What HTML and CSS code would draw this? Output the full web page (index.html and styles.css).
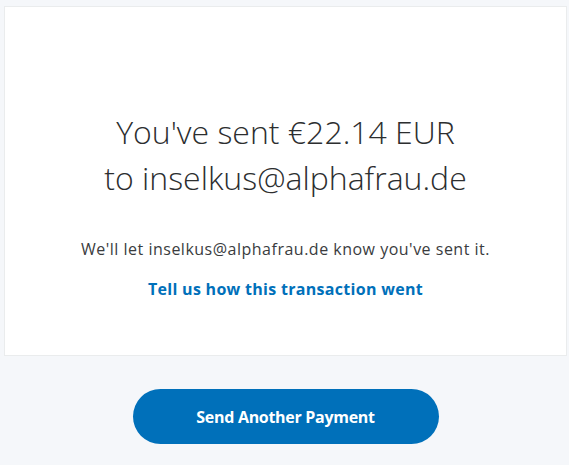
FILE: index.html
```html
<!DOCTYPE html>
<html lang="en">
<head>
<meta charset="utf-8">
<link rel="stylesheet" href="styles.css">
</head>
<body>
<main class="page">
  <section class="card">
    <h1 class="title">You've sent €22.14 EUR<br>to inselkus@alphafrau.de</h1>
    <p class="note">We'll let inselkus@alphafrau.de know you've sent it.</p>
    <a class="feedback" href="#">Tell us how this transaction went</a>
  </section>
  <div class="actions">
    <button class="primary" type="button">Send Another Payment</button>
  </div>
</main>
</body>
</html>
```
FILE: styles.css
```css
* { box-sizing: border-box; }
html, body { margin: 0; padding: 0; }
body {
  background: #f5f7fa;
  font-family: "Open Sans", "Noto Sans", sans-serif;
  color: #2c2e2f;
  width: 569px;
  height: 465px;
  overflow: hidden;
}
.page {
  padding: 6px 2px 0 4px;
}
.card {
  background: #ffffff;
  border: 1px solid #eaeced;
  height: 350px;
  display: flex;
  flex-direction: column;
  align-items: center;
  padding-top: 102px;
}
.title {
  margin: 0;
  font-weight: 300;
  font-size: 32px;
  line-height: 46px;
  text-align: center;
  color: #2c2e2f;
}
.note {
  margin: 37px 0 0;
  font-size: 16px;
  line-height: 22px;
  letter-spacing: 0.5px;
  color: #3a3c3e;
}
.feedback {
  margin-top: 18px;
  font-size: 16px;
  line-height: 22px;
  letter-spacing: 0.3px;
  font-weight: 700;
  color: #0070ba;
  text-decoration: none;
}
.actions {
  display: flex;
  justify-content: center;
  padding-top: 33px;
}
.primary {
  width: 306px;
  height: 55px;
  border: none;
  border-radius: 28px;
  background: #0070ba;
  color: #ffffff;
  font-family: "Open Sans", "Noto Sans", sans-serif;
  font-weight: 700;
  font-size: 16px;
  letter-spacing: -0.3px;
  padding: 0;
}
```
